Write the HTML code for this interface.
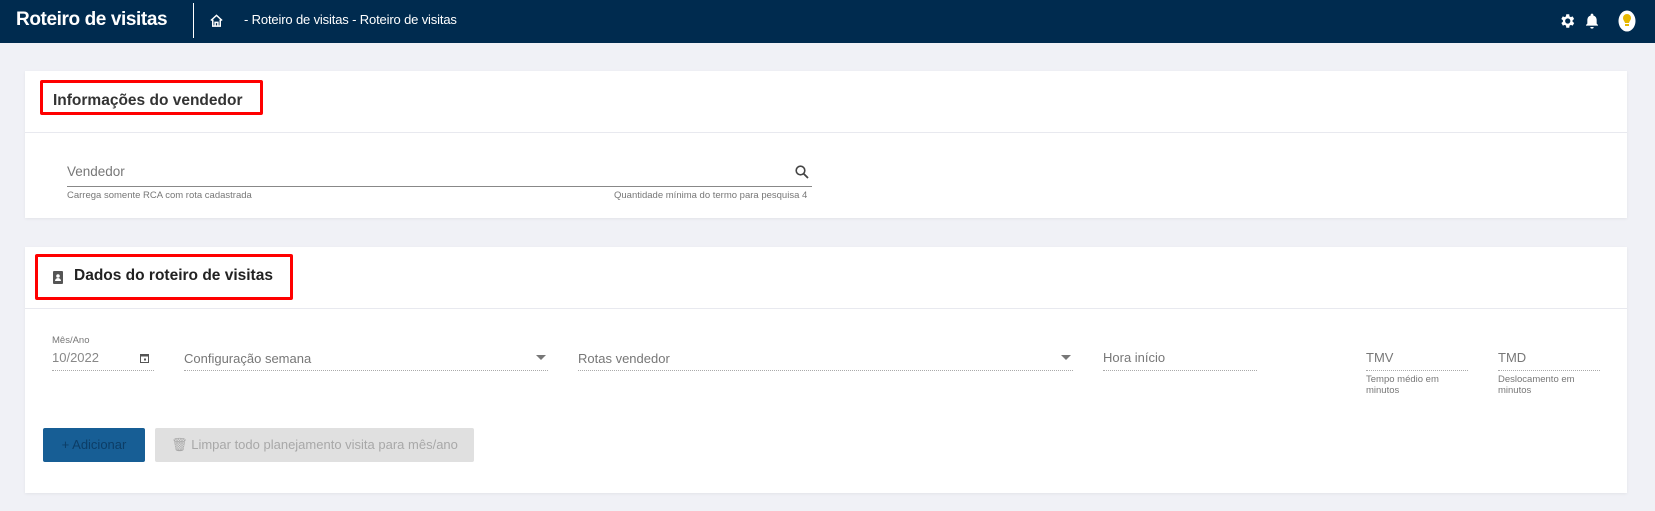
<!DOCTYPE html>
<html><head><meta charset="utf-8"><style>
*{box-sizing:border-box;margin:0;padding:0}
body{width:1655px;height:511px;overflow:hidden;background:#f0f1f6;font-family:"Liberation Sans",sans-serif;position:relative}
.nav{position:absolute;left:0;top:0;width:1655px;height:43px;background:#002b4f;color:#fff}
.abs{position:absolute}
.card{position:absolute;left:25px;width:1602px;background:#fff;box-shadow:0 1px 3px rgba(0,0,0,.06)}
.red{position:absolute;border:3px solid #f00;border-radius:2px}
.lbl{position:absolute;color:#777;font-size:13px;white-space:nowrap}
.dot{position:absolute;height:0;border-bottom:1px dotted #aaa}
.hint{position:absolute;font-size:9.5px;color:#777;line-height:11px}
</style></head><body>
<div class="nav">
  <div class="abs" style="left:16px;top:9px;font-size:19px;font-weight:bold;letter-spacing:-0.4px">Roteiro de visitas</div>
  <div class="abs" style="left:193px;top:3px;width:1px;height:35px;background:#fff"></div>
  <svg class="abs" style="left:209px;top:13px" width="15" height="15" viewBox="0 0 16 16"><path d="M2 8 L8 2.5 L14 8 M4 7 V14 H12 V7 M6.5 14 V10 H9.5 V14" fill="none" stroke="#fff" stroke-width="1.6"/></svg>
  <div class="abs" style="left:244px;top:12px;font-size:13px;letter-spacing:-0.15px">- Roteiro de visitas - Roteiro de visitas</div>
  <svg class="abs" style="left:1558px;top:12px" width="18" height="18" viewBox="0 0 24 24"><path fill="#fff" d="M19.4 13a7.5 7.5 0 000-2l2.1-1.6-2-3.5-2.5 1a7 7 0 00-1.7-1L15 3h-4l-.4 2.9a7 7 0 00-1.7 1l-2.5-1-2 3.5L6.6 11a7.5 7.5 0 000 2l-2.1 1.6 2 3.5 2.5-1a7 7 0 001.7 1L11 21h4l.4-2.9a7 7 0 001.7-1l2.5 1 2-3.5zM13 15.5a3.5 3.5 0 110-7 3.5 3.5 0 010 7z"/></svg>
  <svg class="abs" style="left:1584px;top:12px" width="16" height="18" viewBox="0 0 24 26"><path fill="#fff" d="M12 2a2 2 0 012 2v.7A7 7 0 0119 11v6l2 2v1H3v-1l2-2v-6a7 7 0 015-6.3V4a2 2 0 012-2zM9.5 22h5a2.5 2.5 0 01-5 0z"/></svg>
  <svg class="abs" style="left:1618px;top:10px" width="18" height="22" viewBox="0 0 18 22"><ellipse cx="9" cy="11" rx="8.5" ry="10.5" fill="#fff"/><path d="M9 4a4 4 0 00-4 4c0 2 1.5 3 2 5h4c.5-2 2-3 2-5a4 4 0 00-4-4zM7 14h4v2H7z" fill="#e6b800"/></svg>
</div>

<div class="card" style="top:71px;height:147px">
  <div class="abs" style="left:0;top:61px;width:1602px;height:1px;background:#e8e9ef"></div>
</div>
<div class="red" style="left:40px;top:80px;width:223px;height:35px"></div>
<div class="abs" style="left:53px;top:92px;font-size:15.5px;font-weight:bold;color:#333">Informações do vendedor</div>
<div class="lbl" style="left:67px;top:164px;font-size:13.5px">Vendedor</div>
<svg class="abs" style="left:795px;top:165px" width="14" height="14" viewBox="0 0 14 14"><circle cx="5.5" cy="5.5" r="4.3" fill="none" stroke="#444" stroke-width="1.6"/><path d="M8.7 8.7L13 13" stroke="#444" stroke-width="1.8"/></svg>
<div class="abs" style="left:67px;top:186px;width:745px;height:1px;background:#888"></div>
<div class="hint" style="left:67px;top:190px">Carrega somente RCA com rota cadastrada</div>
<div class="hint" style="left:614px;top:190px">Quantidade mínima do termo para pesquisa 4</div>

<div class="card" style="top:247px;height:246px">
  <div class="abs" style="left:0;top:61px;width:1602px;height:1px;background:#e8e9ef"></div>
</div>
<div class="red" style="left:35px;top:254px;width:258px;height:46px"></div>
<svg class="abs" style="left:53px;top:271px" width="11" height="13" viewBox="0 0 11 13"><rect x="0" y="0" width="10" height="13" rx="1" fill="#555"/><circle cx="5" cy="5" r="1.8" fill="#fff"/><path d="M2 10a3 3 0 016 0z" fill="#fff"/></svg>
<div class="abs" style="left:74px;top:267px;font-size:15.5px;font-weight:bold;color:#222">Dados do roteiro de visitas</div>

<div class="lbl" style="left:52px;top:335px;font-size:9.5px">Mês/Ano</div>
<div class="lbl" style="left:52px;top:350px;font-size:13px;color:#888">10/2022</div>
<svg class="abs" style="left:140px;top:353px" width="9" height="10" viewBox="0 0 9 10"><rect x=".5" y="1.5" width="8" height="8" fill="none" stroke="#555"/><rect x="0" y="1" width="9" height="2.5" fill="#555"/><rect x="4" y="5.5" width="2" height="2" fill="#555"/></svg>
<div class="dot" style="left:52px;top:370px;width:102px"></div>

<div class="lbl" style="left:184px;top:351px">Configuração semana</div>
<svg class="abs" style="left:536px;top:355px" width="10" height="6"><path d="M0 0h10L5 5z" fill="#777"/></svg>
<div class="dot" style="left:184px;top:370px;width:364px"></div>

<div class="lbl" style="left:578px;top:351px">Rotas vendedor</div>
<svg class="abs" style="left:1061px;top:355px" width="10" height="6"><path d="M0 0h10L5 5z" fill="#777"/></svg>
<div class="dot" style="left:578px;top:370px;width:495px"></div>

<div class="lbl" style="left:1103px;top:350px">Hora início</div>
<div class="dot" style="left:1103px;top:370px;width:154px"></div>

<div class="lbl" style="left:1366px;top:350px">TMV</div>
<div class="dot" style="left:1366px;top:370px;width:102px"></div>
<div class="hint" style="left:1366px;top:374px;width:100px">Tempo médio em minutos</div>

<div class="lbl" style="left:1498px;top:350px">TMD</div>
<div class="dot" style="left:1498px;top:370px;width:102px"></div>
<div class="hint" style="left:1498px;top:374px;width:100px">Deslocamento em minutos</div>

<div class="abs" style="left:43px;top:428px;width:102px;height:34px;background:#175e95;border-radius:2px;color:#0c3d66;font-size:13px;line-height:34px;text-align:center">+ Adicionar</div>
<div class="abs" style="left:155px;top:428px;width:319px;height:34px;background:#e0e0e0;border-radius:2px;color:#a8a8a8;font-size:13px;line-height:34px;text-align:center">🗑 Limpar todo planejamento visita para mês/ano</div>
</body></html>
